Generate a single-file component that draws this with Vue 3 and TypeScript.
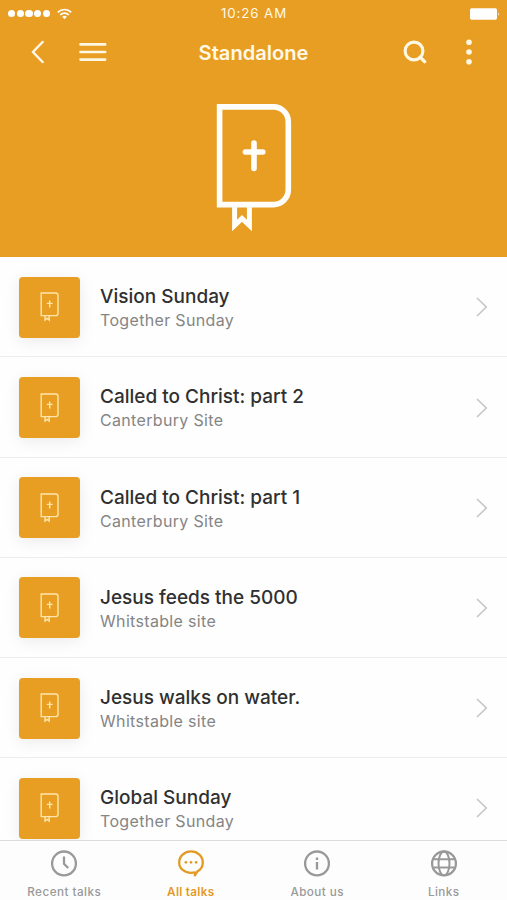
<script setup lang="ts">
interface Talk {
  title: string
  site: string
}

interface Tab {
  id: 'recent' | 'talks' | 'about' | 'links'
  label: string
}

const talks: Talk[] = [
  { title: 'Vision Sunday', site: 'Together Sunday' },
  { title: 'Called to Christ: part 2', site: 'Canterbury Site' },
  { title: 'Called to Christ: part 1', site: 'Canterbury Site' },
  { title: 'Jesus feeds the 5000', site: 'Whitstable site' },
  { title: 'Jesus walks on water.', site: 'Whitstable site' },
  { title: 'Global Sunday', site: 'Together Sunday' },
]

const tabs: Tab[] = [
  { id: 'recent', label: 'Recent talks' },
  { id: 'talks', label: 'All talks' },
  { id: 'about', label: 'About us' },
  { id: 'links', label: 'Links' },
]

const activeTab: Tab['id'] = 'talks'
</script>

<template>
  <div class="screen">
    <header class="header">
      <div class="status">
        <div class="signal">
          <i v-for="n in 5" :key="n" class="signal-dot"></i>
          <svg class="wifi" width="15" height="12" viewBox="0 0 15 12">
            <path d="M0.8 4.3A9.4 9.4 0 0 1 14.2 4.3M3.2 7A6 6 0 0 1 11.8 7" fill="none" stroke="currentColor" stroke-width="1.7" />
            <path d="M5.2 8.8A3.3 3.3 0 0 1 9.8 8.8L7.5 11.3Z" fill="currentColor" />
          </svg>
        </div>
        <span class="time">10:26 AM</span>
        <div class="power">
          <svg width="30" height="12" viewBox="0 0 30 12">
            <rect x="0" y="0.3" width="27" height="11.4" rx="1.6" fill="currentColor" />
            <path d="M28 4.2Q29.8 6 28 7.8Z" fill="currentColor" />
          </svg>
        </div>
      </div>

      <nav class="navbar">
        <div class="nav-group">
          <svg width="14" height="24" viewBox="0 0 14 24">
            <path d="M12.6 2L2.9 12L12.6 22" fill="none" stroke="currentColor" stroke-width="2.5" stroke-linecap="round" stroke-linejoin="round" />
          </svg>
          <svg width="28" height="20" viewBox="0 0 28 20">
            <path d="M1.5 2.4H26.2M1.5 10H26.2M1.5 17.6H26.2" fill="none" stroke="currentColor" stroke-width="2.6" stroke-linecap="round" />
          </svg>
        </div>
        <h1 class="heading">Standalone</h1>
        <div class="nav-group nav-group-end">
          <svg width="24" height="24" viewBox="0 0 24 24">
            <circle cx="11" cy="11" r="8.9" fill="none" stroke="currentColor" stroke-width="3.1" />
            <path d="M17.2 17.2L21.6 21.6" fill="none" stroke="currentColor" stroke-width="3.4" stroke-linecap="round" />
          </svg>
          <svg width="6" height="26" viewBox="0 0 6 26">
            <g fill="currentColor">
              <circle cx="3" cy="3.2" r="2.8" />
              <circle cx="3" cy="13" r="2.8" />
              <circle cx="3" cy="22.8" r="2.8" />
            </g>
          </svg>
        </div>
      </nav>

      <div class="hero">
        <svg class="hero-book" width="76" height="130" viewBox="0 0 76 130" fill="none" stroke="currentColor" stroke-width="5.6">
          <path d="M3.6 3.9H57.5A14.8 14.8 0 0 1 72.3 18.7V86.8A14.8 14.8 0 0 1 57.5 101.6H3.6Z" />
          <path d="M38 40V65.5M29.4 49H46.8" stroke-linecap="round" />
          <path d="M18.6 102V122.5L26 115.5L33.4 122.5V102" stroke-width="5" stroke-miterlimit="8" />
        </svg>
      </div>
    </header>

    <main class="list">
      <article v-for="talk in talks" :key="talk.title" class="row">
        <div class="thumb">
          <svg width="19" height="30" viewBox="0 0 19 30" fill="none" stroke="currentColor" stroke-width="1.4">
            <path d="M1.2 1H15.8A2.2 2.2 0 0 1 18 3.2V21.2A2.4 2.4 0 0 1 15.6 23.6H1.2Z" />
            <path d="M9.7 9V15M7.4 11.4H12" stroke-linecap="round" />
            <path d="M5 23.6V28L7.1 26.4L9.2 28V23.6" />
          </svg>
        </div>
        <div class="copy">
          <h2 class="title">{{ talk.title }}</h2>
          <p class="site">{{ talk.site }}</p>
        </div>
        <svg class="chevron" width="12" height="20" viewBox="0 0 12 20">
          <path d="M1 1L10.3 10L1 19" fill="none" stroke="currentColor" stroke-width="1.6" />
        </svg>
      </article>
    </main>

    <footer class="tabs">
      <div v-for="tab in tabs" :key="tab.id" class="tab" :class="{ active: tab.id === activeTab }">
        <svg width="28" height="28" viewBox="0 0 28 28" fill="none" stroke="currentColor" stroke-width="2.3">
          <template v-if="tab.id === 'recent'">
            <circle cx="14" cy="14.4" r="11.9" />
            <path d="M14 7.4V14.8L18.2 19" />
          </template>
          <template v-else-if="tab.id === 'talks'">
            <path d="M17.9 23.4V26.4L20.5 22.3C24 20.4 25.8 17 25.8 13.4C25.8 7.1 20.5 2.4 14 2.4S2.2 7.1 2.2 13.4S7.5 23.8 14 23.8Q16 23.8 17.9 23.4Z" stroke-linejoin="round" />
            <g fill="currentColor" stroke="none">
              <circle cx="8.9" cy="13.3" r="1.35" />
              <circle cx="14" cy="13.3" r="1.35" />
              <circle cx="19.1" cy="13.3" r="1.35" />
            </g>
          </template>
          <template v-else-if="tab.id === 'about'">
            <circle cx="14" cy="14.4" r="11.9" />
            <path d="M14 13.1V20.4M14 8.5V10.9" />
          </template>
          <template v-else>
            <circle cx="14" cy="14.4" r="11.9" />
            <ellipse cx="14" cy="14.4" rx="5.5" ry="11.9" stroke-width="2" />
            <path d="M3.5 10.3H24.5M3.5 18.5H24.5" stroke-width="2" />
          </template>
        </svg>
        <span class="tab-label">{{ tab.label }}</span>
      </div>
    </footer>
  </div>
</template>

<style>
body {
  margin: 0;
  overflow: hidden;
}
</style>

<style scoped>
.screen {
  display: flex;
  flex-direction: column;
  width: 507px;
  height: 900px;
  overflow: hidden;
  background: #fefefe;
  font-family: Inter, 'Liberation Sans', sans-serif;
}

svg {
  display: block;
  flex: none;
}

.header {
  flex: none;
  height: 257.3px;
  background: #e79e23;
  color: #fff8e4;
}

.status {
  display: grid;
  grid-template-columns: 1fr auto 1fr;
  align-items: center;
  height: 27px;
  padding: 0 7px 0 8px;
}

.signal {
  display: flex;
  align-items: center;
  gap: 1.4px;
  color: #fff;
}

.signal-dot {
  width: 7.3px;
  height: 7.3px;
  border-radius: 50%;
  background: #fff;
}

.wifi {
  margin-left: 6px;
}

.time {
  font-size: 13.3px;
  line-height: 27px;
  letter-spacing: 0.9px;
}

.power {
  display: flex;
  justify-content: flex-end;
  color: #fff;
}

.navbar {
  display: grid;
  grid-template-columns: 1fr auto 1fr;
  align-items: center;
  height: 50px;
  padding: 0 35px 0 30px;
}

.nav-group {
  display: flex;
  align-items: center;
  gap: 35px;
}

.nav-group-end {
  gap: 39px;
  justify-content: flex-end;
}

.heading {
  margin: 0;
  padding: 2px 0 0 5px;
  font-size: 20.1px;
  font-weight: 600;
  line-height: 48px;
}

.hero {
  display: flex;
  justify-content: center;
  padding-top: 26px;
}

.hero-book {
  color: #fffefa;
}

.list {
  flex: 1;
  min-height: 0;
  overflow: hidden;
}

.row {
  display: flex;
  align-items: center;
  box-sizing: border-box;
  height: 100.2px;
  padding: 1px 19px 0;
  border-bottom: 1px solid #ededed;
}

.thumb {
  display: flex;
  flex: none;
  align-items: center;
  justify-content: center;
  width: 61px;
  height: 61px;
  border-radius: 4px;
  background: #e79e23;
  color: #ffe5ac;
  box-shadow: 0 3px 16px rgba(0, 0, 0, 0.08);
}

.copy {
  flex: 1;
  padding: 0.6px 0 0 20px;
}

.title {
  margin: 0;
  color: #303030;
  font-size: 19px;
  font-weight: 500;
  line-height: 25px;
}

.site {
  margin: 0;
  color: #858585;
  font-size: 16px;
  line-height: 22px;
  letter-spacing: 0.33px;
}

.chevron {
  color: #c6c6c6;
}

.tabs {
  display: grid;
  flex: none;
  grid-template-columns: repeat(4, 1fr);
  box-sizing: border-box;
  height: 60px;
  padding-left: 1px;
  border-top: 1px solid #dcdcdc;
  background: #fdfdfd;
}

.tab {
  display: flex;
  flex-direction: column;
  align-items: center;
  padding-top: 8px;
  color: #999;
}

.tab-label {
  margin-top: 7px;
  font-size: 11.7px;
  font-weight: 500;
  line-height: 16px;
  letter-spacing: 0.46px;
}

.active {
  color: #e39a25;
}

.active .tab-label {
  font-weight: 600;
  letter-spacing: 0.3px;
}
</style>
